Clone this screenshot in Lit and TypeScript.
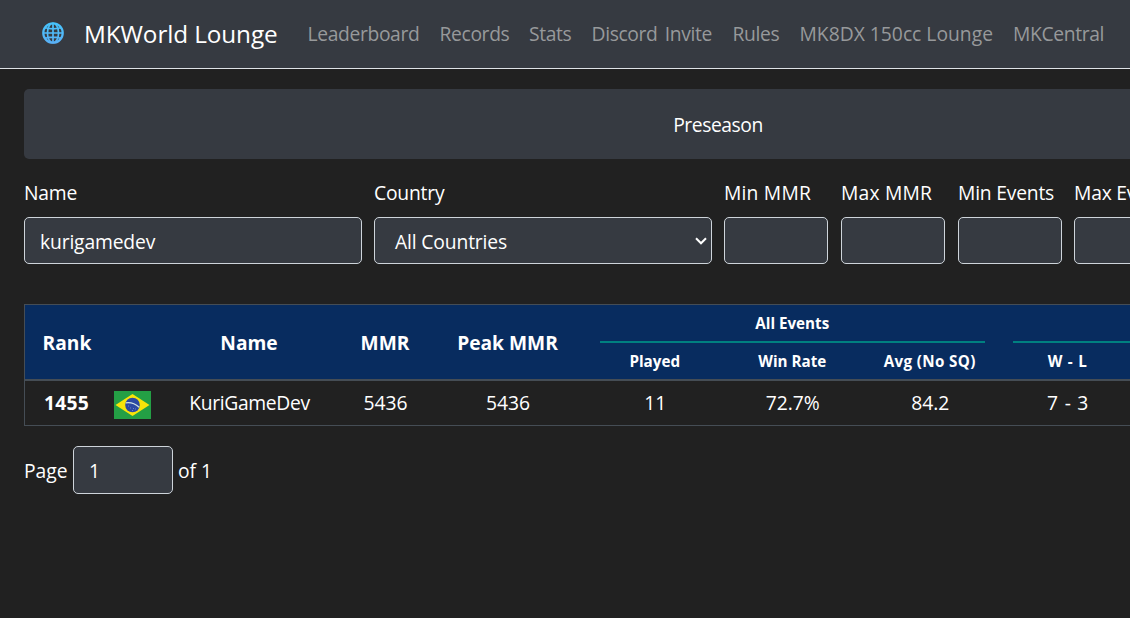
import { LitElement, html, css, svg } from "lit";
import { customElement } from "lit/decorators.js";

const globe = svg`
  <defs>
    <linearGradient id="g" x1="0" y1="0" x2="0" y2="21" gradientUnits="userSpaceOnUse">
      <stop offset="0" stop-color="#45c4fb" />
      <stop offset="1" stop-color="#5ab0f7" />
    </linearGradient>
  </defs>
  <g fill="none" stroke="url(#g)" stroke-width="1.6">
    <circle cx="10.5" cy="10.5" r="9.3" stroke-width="2.1" />
    <ellipse cx="10.5" cy="10.5" rx="5.3" ry="9.3" />
    <path d="M10.5 1V20M1 10.5H20M3 5.5Q10.5 7.6 18 5.5M3 15.5Q10.5 13.4 18 15.5" />
  </g>`;

const flag = svg`
  <path d="M0 0H37V28H0Z" fill="#249f45" />
  <path d="M18.5 3 35.5 14 18.5 25 1.5 14Z" fill="#f8e509" />
  <circle cx="18.5" cy="14" r="7.3" fill="#2b49a3" />
  <path d="M11.8 11.9Q19 10.8 25.2 16.3" fill="none" stroke="#cfe3e3" stroke-width="1.3" />
  <path d="M14 15h1M16 17h1M19 17.5h1M21 18h1M18 19.5h1" stroke="#7f93c8" stroke-width=".8" />`;

@customElement("app-root")
export class AppRoot extends LitElement {
  static styles = css`
    * { box-sizing: border-box; }
    :host {
      display: block;
      height: 618px;
      overflow: hidden;
      background: #212121;
      color: #fff;
      font: 19.3px/30px "Open Sans", "Noto Sans", sans-serif;
    }
    nav {
      height: 69px;
      display: flex;
      align-items: center;
      background: #363a41;
      border-bottom: 1px solid #dee2e6;
      padding: 0 0 1px 42px;
    }
    .globe { display: block; width: 22px; height: 22px; margin-bottom: 1px; }
    .brand {
      font-size: 24.3px;
      letter-spacing: -0.1px;
      width: 223.5px;
      margin-left: 20px;
      white-space: nowrap;
    }
    .links {
      display: grid;
      grid-template-columns: 132px 89.5px 62.5px 141px 67px 213.5px 110px;
      color: #97999b;
      white-space: nowrap;
      letter-spacing: -0.36px;
      word-spacing: 2.5px;
    }
    .link:nth-child(6) { letter-spacing: 0; word-spacing: 0; }
    main { width: 1436px; padding: 20px 24px 0; }
    .season {
      height: 70px;
      border-radius: 5px;
      background: #363a41;
      display: grid;
      place-items: center;
      padding-top: 2px;
      letter-spacing: -0.45px;
    }
    .filters {
      display: grid;
      grid-template-columns: 338px 338px repeat(4, 104px);
      column-gap: 12px;
      margin-top: 19px;
      white-space: nowrap;
    }
    .range { width: 104px; }
    .range:nth-child(4) { margin-left: 1px; }
    .range:nth-child(n + 5) { margin-left: 2px; }
    .mmr { letter-spacing: 0.2px; }
    .tight { letter-spacing: -0.2px; }
    .label { height: 39px; }
    .box {
      height: 47px;
      border: 1px solid #ced4da;
      border-radius: 5px;
      background: #363a41;
      padding: 2px 15px 0;
      display: flex;
      align-items: center;
      letter-spacing: -0.15px;
    }
    .select { justify-content: space-between; padding: 2px 3px 0 20px; }
    .chev { width: 14px; height: 10px; margin-bottom: 2px; }
    .table {
      margin-top: 40px;
      border: 1px solid #454d55;
      display: grid;
      grid-template-columns: 83px 49px 184px 88px 157px repeat(6, 137.5px);
      grid-template-rows: 38px 38px 44px;
      overflow: hidden;
      text-align: center;
      white-space: nowrap;
    }
    .head {
      grid-column: 1 / -1;
      grid-row: 1 / 3;
      background: #082c5f;
      border-bottom: 2px solid #454d55;
      display: grid;
      grid-template-columns: subgrid;
      grid-template-rows: 38px 36px;
      align-items: center;
      font-weight: 700;
      font-size: 19.2px;
    }
    .tall { grid-row: 1 / 3; padding-top: 2px; }
    .c1 { padding-left: 1px; }
    .small { font-size: 15.2px; line-height: 28px; grid-row: 2; padding-bottom: 1px; }
    .group {
      grid-row: 1;
      font-size: 15.2px;
      height: 38px;
      line-height: 37px;
      margin: 0 14px;
      border-bottom: 2px solid #008080;
    }
    .g1 { grid-column: 6 / 9; }
    .g2 { grid-column: 9 / 12; }
    .c1 { grid-column: 1; } .c3 { grid-column: 3; } .c4 { grid-column: 4; }
    .c5 { grid-column: 5; } .c6 { grid-column: 6; } .c7 { grid-column: 7; }
    .c8 { grid-column: 8; letter-spacing: 0.35px; }
    .c9 { grid-column: 9; word-spacing: 1.5px; }
    .cell { line-height: 43px; padding-left: 1px; }
    .bold { font-weight: 700; padding-left: 0; letter-spacing: 0.2px; }
    .player { letter-spacing: -0.33px; }
    .record { word-spacing: 1.5px; }
    .flag { display: block; width: 37px; height: 28px; margin: 10px auto 0 6px; }
    .pager { display: flex; align-items: center; margin-top: 20px; }
    .page { width: 49px; }
    .num { width: 100px; height: 48px; margin-right: 5px; }
    .pager span { padding-top: 2px; }
  `;

  render() {
    return html`
      <nav>
        <svg class="globe" viewBox="0 0 21 21">${globe}</svg>
        <span class="brand">MKWorld Lounge</span>
        <div class="links">
          ${["Leaderboard", "Records", "Stats", "Discord Invite", "Rules", "MK8DX 150cc Lounge", "MKCentral"].map(
            (t) => html`<span class="link">${t}</span>`
          )}
        </div>
      </nav>
      <main>
        <div class="season">Preseason</div>
        <div class="filters">
          <div><div class="label tight">Name</div><div class="box">kurigamedev</div></div>
          <div>
            <div class="label tight">Country</div>
            <div class="box select">
              All Countries
              <svg class="chev" viewBox="0 0 14 10"><path d="M2 2.3 7 7.3 12 2.3" fill="none" stroke="#fff" stroke-width="2" /></svg>
            </div>
          </div>
          ${["Min MMR", "Max MMR", "Min Events", "Max Events"].map(
            (t) => html`<div class="range">
              <div class="label ${t.endsWith("MMR") ? "mmr" : "tight"}">${t}</div>
              <div class="box"></div>
            </div>`
          )}
        </div>
        <div class="table">
          <div class="head">
            <div class="tall c1">Rank</div>
            <div class="tall c3">Name</div>
            <div class="tall c4">MMR</div>
            <div class="tall c5">Peak MMR</div>
            <div class="group g1">All Events</div>
            <div class="group g2"></div>
            <div class="small c6">Played</div>
            <div class="small c7">Win Rate</div>
            <div class="small c8">Avg (No SQ)</div>
            <div class="small c9">W - L</div>
          </div>
          <div class="cell bold">1455</div>
          <svg class="flag" viewBox="0 0 37 28">${flag}</svg>
          <div class="cell player">KuriGameDev</div>
          <div class="cell">5436</div>
          <div class="cell">5436</div>
          <div class="cell">11</div>
          <div class="cell">72.7%</div>
          <div class="cell">84.2</div>
          <div class="cell record">7 - 3</div>
        </div>
        <div class="pager">
          <span class="page">Page</span>
          <div class="box num">1</div>
          <span>of 1</span>
        </div>
      </main>
    `;
  }
}
